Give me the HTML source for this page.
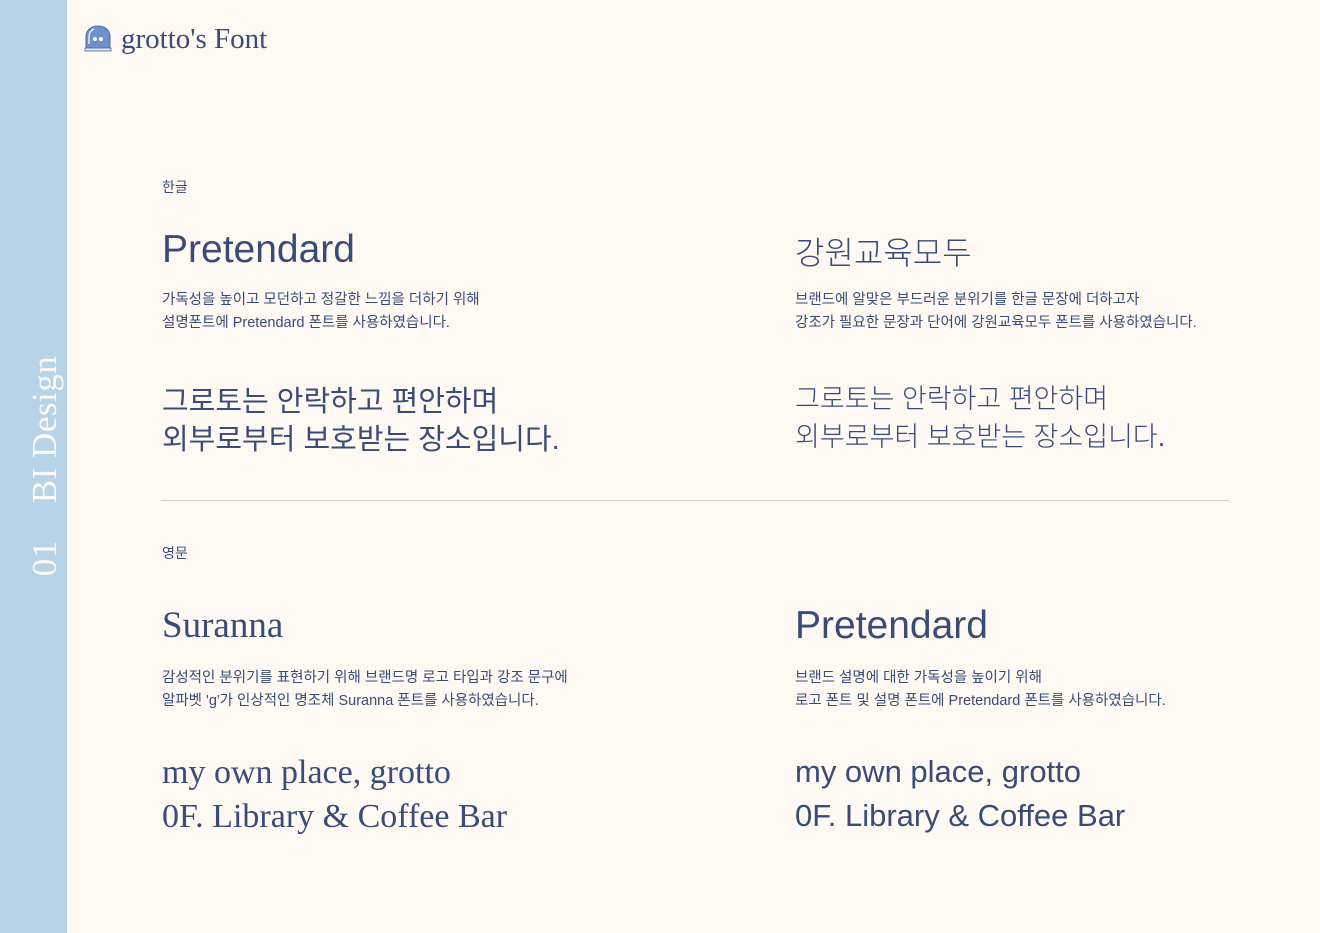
<!DOCTYPE html>
<html><head><meta charset="utf-8"><style>
body{margin:0;width:1320px;height:933px;background:#fefaf3;position:relative;overflow:hidden;color:#3b4b78;font-family:"Liberation Sans","Noto Sans CJK KR",sans-serif}
.side{position:absolute;left:0;top:0;width:67px;height:933px;background:#b6d3e7}
.vt{position:absolute;left:45px;top:466px;transform:translate(-50%,-50%) rotate(-90deg);white-space:nowrap;font-family:"Liberation Serif",serif;font-size:35px;color:#fefaf3;letter-spacing:0.5px}
.a{position:absolute;white-space:nowrap}
.s{font-family:"Liberation Serif","Noto Serif CJK SC",serif}
.lbl{font-size:14px}
.h{font-size:39px}
.d{font-size:14.5px;line-height:23px}
.k{font-size:29px;line-height:38px}
.e{font-size:31px;line-height:44px}
.thin{font-weight:300}
</style></head><body>
<div class="side"></div>
<div class="vt">01&nbsp;&nbsp;&nbsp;&nbsp;BI Design</div>
<svg class="a" style="left:84px;top:24px" width="28" height="28" viewBox="0 0 28 28"><path d="M2 25V13C2 6 7 2 14 2s12 4 12 11v12z" fill="#6f8fc9" stroke="#4a66a8" stroke-width="1"/><path d="M5 20V13c0-4 2-7 5-8" stroke="#fff" stroke-width="1.2" fill="none"/><rect x="1" y="24" width="26" height="3" fill="#dbe6f5" stroke="#4a66a8" stroke-width=".8"/><circle cx="11" cy="15" r="2" fill="#fff"/><circle cx="17" cy="15" r="2" fill="#fff"/></svg>
<div class="a s" style="left:121px;top:23px;font-size:29px">grotto's Font</div>
<div class="a lbl" style="left:162px;top:177px">한글</div>
<div class="a h" style="left:162px;top:228px">Pretendard</div>
<div class="a d" style="left:162px;top:289px">가독성을 높이고 모던하고 정갈한 느낌을 더하기 위해<br>설명폰트에 Pretendard 폰트를 사용하였습니다.</div>
<div class="a k" style="left:162px;top:383px">그로토는 안락하고 편안하며<br>외부로부터 보호받는 장소입니다.</div>
<div class="a thin" style="left:795px;top:228px;font-size:32px">강원교육모두</div>
<div class="a d" style="left:795px;top:289px">브랜드에 알맞은 부드러운 분위기를 한글 문장에 더하고자<br>강조가 필요한 문장과 단어에 강원교육모두 폰트를 사용하였습니다.</div>
<div class="a thin" style="left:795px;top:380px;font-size:27px;line-height:38px">그로토는 안락하고 편안하며<br>외부로부터 보호받는 장소입니다.</div>
<div class="a" style="left:161px;top:500px;width:1068px;height:1px;background:#cdd3d8"></div>
<div class="a lbl" style="left:162px;top:543px">영문</div>
<div class="a s" style="left:162px;top:604px;font-size:37px">Suranna</div>
<div class="a d" style="left:162px;top:667px">감성적인 분위기를 표현하기 위해 브랜드명 로고 타입과 강조 문구에<br>알파벳 'g'가 인상적인 명조체 Suranna 폰트를 사용하였습니다.</div>
<div class="a s e" style="left:162px;top:751px;font-size:34px">my own place, grotto<br>0F. Library &amp; Coffee Bar</div>
<div class="a h" style="left:795px;top:604px">Pretendard</div>
<div class="a d" style="left:795px;top:667px">브랜드 설명에 대한 가독성을 높이기 위해<br>로고 폰트 및 설명 폰트에 Pretendard 폰트를 사용하였습니다.</div>
<div class="a e" style="left:795px;top:750px">my own place, grotto<br>0F. Library &amp; Coffee Bar</div>
</body></html>
